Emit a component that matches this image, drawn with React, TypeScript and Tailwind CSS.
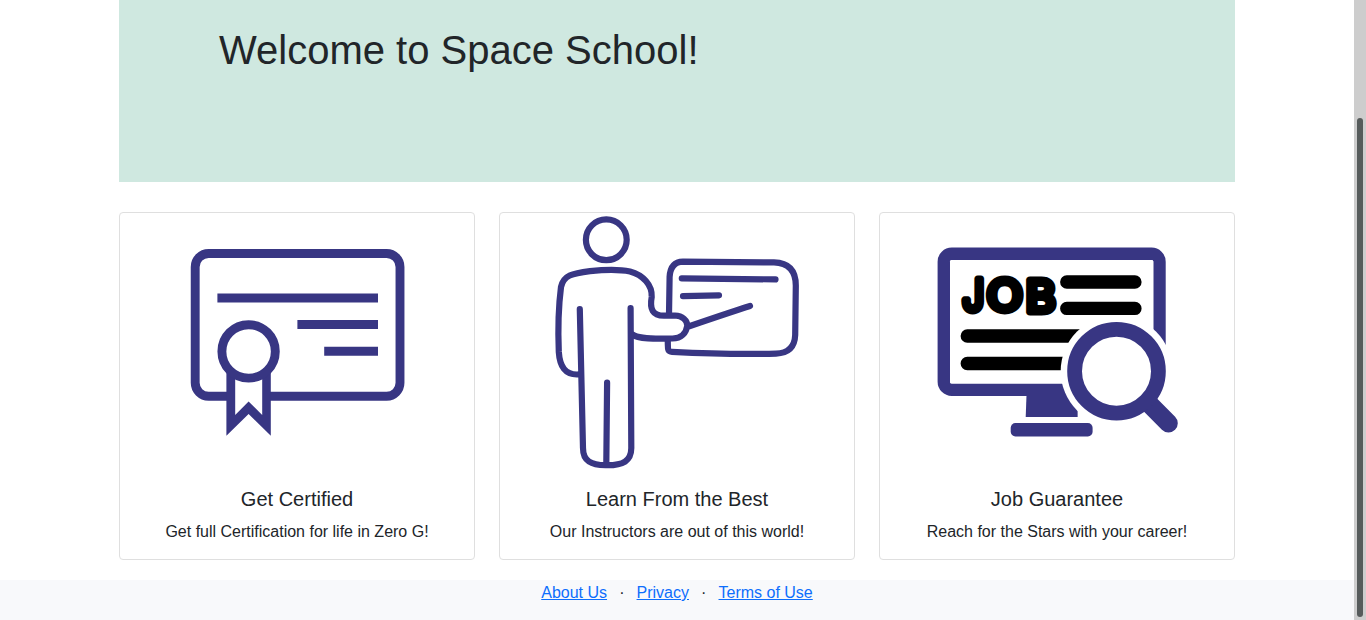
import type { ReactNode } from "react";

const INK = "#383683";

function CertificateArt() {
  return (
    <svg viewBox="169 213 256 258" width="256" height="258" className="shrink-0" aria-hidden="true">
      <rect x="195.2" y="253.5" width="204.8" height="142.7" rx="13.4" fill="none" stroke={INK} strokeWidth="8.9" />
      <path d="M217.4 298H378M297.4 324.6H378M324.2 351.3H378" stroke={INK} strokeWidth="9" />
      <path d="M226.4 360H270.8V435.7L248.6 414L226.4 435.7Z" fill={INK} />
      <path d="M235.2 360H262.2V415L248.6 401.4L235.2 415Z" fill="#fff" />
      <circle cx="248.6" cy="351.4" r="26.7" fill="#fff" stroke={INK} strokeWidth="8.9" />
    </svg>
  );
}

function InstructorArt() {
  return (
    <svg
      viewBox="549 213 256 258"
      width="256"
      height="258"
      className="shrink-0"
      fill="none"
      stroke={INK}
      strokeWidth="6.2"
      strokeLinecap="round"
      strokeLinejoin="round"
      aria-hidden="true"
    >
      <circle cx="606.3" cy="239.8" r="20.4" />
      <path d="M669 315L669.6 277Q670.5 262 683 261.7L774 262.4Q796 263 795.8 286L795.2 335Q794.5 353 776 353.6C740 354.500 705 353.500 672 351.800C666.500 351.400 668.300 348 667.700 340" />
      <path d="M681.800 278.400L775.500 279.400M683 296.200L719 295.300M690 326Q728 313 750 306" />
      <path d="M579 374.400C565 375.500 559.700 366 558.800 352C557.900 330 558.300 308 561 287C563.500 275.500 572 273.300 590 271.100C604 269.700 621 269.600 630 271.500C643 275 652.300 285 651.700 297C649.500 309 652.500 315.600 664 315.700L675 315.500C682.500 315.700 687.300 320.500 687.300 325.700C686.300 332.500 681.500 338.700 672 338.500C655 339 638 339 632.500 334.500" />
      <path d="M579.800 309.200L583 448C583 461 591 465.400 606.500 465.200C623 465.400 631.200 461 631.300 448L630.600 308.200M607.100 382.600L606.300 465" />
    </svg>
  );
}

function JobArt() {
  return (
    <svg viewBox="929 213 256 258" width="256" height="258" className="shrink-0" aria-hidden="true">
      <rect x="943.8" y="253.700" width="215.700" height="136.100" rx="8" fill="none" stroke={INK} strokeWidth="12.4" />
      <rect x="950" y="259.900" width="203.300" height="123.700" rx="1.500" fill="#fff" />
      <path d="M1026.700 390H1077.600V417H1025.700Z" fill={INK} />
      <rect x="1010.700" y="423" width="81.900" height="13.500" rx="4.700" fill={INK} />
      <g stroke="#000" strokeWidth="13.4" strokeLinecap="round">
        <path d="M1066.800 282H1134.900M1066.800 308.400H1134.900M967.300 336H1100M967.300 363.500H1100" />
      </g>
      <g
        fill="#000"
        stroke="#000"
        strokeWidth="7"
        strokeLinejoin="round"
        fontSize="43.5"
        className="font-['Inter',sans-serif] font-normal"
      >
        <text transform="translate(962.600 310.600) scale(0.88 1)">J</text>
        <text transform="translate(986.800 310.600) scale(1.08 1)">O</text>
        <text transform="translate(1025.700 311.700) scale(1.05 1)">B</text>
      </g>
      <circle cx="1116.500" cy="371" r="55.800" fill="#fff" />
      <path d="M1140 394.500L1168.500 423.200" stroke={INK} strokeWidth="18.600" strokeLinecap="round" />
      <circle cx="1116.500" cy="371.200" r="41.900" fill="#fff" stroke={INK} strokeWidth="14.800" />
    </svg>
  );
}

function FeatureCard({ art, title, text }: { art: ReactNode; title: string; text: string }) {
  return (
    <article className="flex h-[348px] flex-col items-center rounded border border-[#dfdfdf] bg-white text-center">
      {art}
      <div className="px-4 pt-4">
        <h5 className="mb-[9px] text-xl leading-6">{title}</h5>
        <p className="text-base leading-6">{text}</p>
      </div>
    </article>
  );
}

export default function App() {
  return (
    <div className="flex h-[620px] overflow-hidden bg-white font-['Liberation_Sans',sans-serif] text-[#212529]">
      <div className="flex flex-1 flex-col">
        <main className="mx-auto w-[1116px] flex-1">
          <header className="h-[182px] bg-[#cfe8e0] pt-[26px] pl-[100px]">
            <h1 className="text-[40px] leading-12">Welcome to Space School!</h1>
          </header>
          <section className="mt-[30px] grid grid-cols-3 gap-6">
            <FeatureCard art={<CertificateArt />} title="Get Certified" text="Get full Certification for life in Zero G!" />
            <FeatureCard art={<InstructorArt />} title="Learn From the Best" text="Our Instructors are out of this world!" />
            <FeatureCard art={<JobArt />} title="Job Guarantee" text="Reach for the Stars with your career!" />
          </section>
        </main>
        <footer className="flex h-10 justify-center bg-[#f8f9fb] pt-px text-base leading-6">
          <a href="#" className="text-[#0d6efd] underline">About Us</a>
          <span className="w-[29.5px] text-center">·</span>
          <a href="#" className="text-[#0d6efd] underline">Privacy</a>
          <span className="w-[29.5px] text-center">·</span>
          <a href="#" className="text-[#0d6efd] underline">Terms of Use</a>
        </footer>
      </div>
      <div className="flex w-3 justify-center bg-[#cdcdcd] pt-[118px]">
        <div className="h-[499px] w-1.5 rounded-full bg-[#565b5b]" />
      </div>
    </div>
  );
}
